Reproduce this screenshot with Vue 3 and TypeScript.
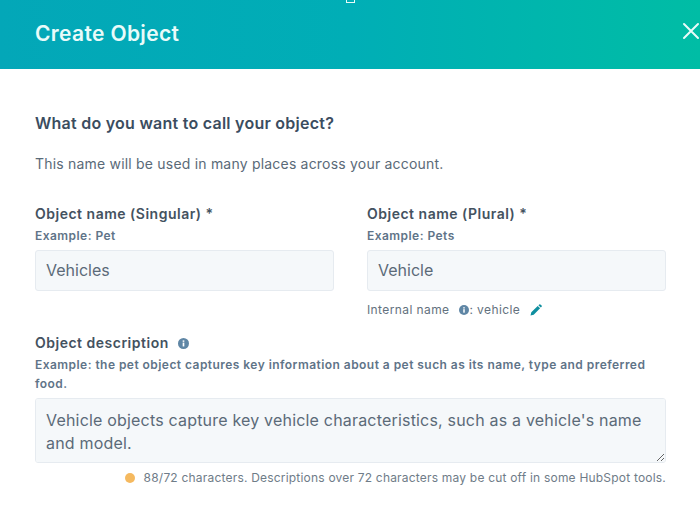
<script setup lang="ts">
import { ref } from 'vue'

const singular = ref('Vehicles')
const plural = ref('Vehicle')
const description = ref("Vehicle objects capture key vehicle characteristics, such as a vehicle's name and model.")
</script>

<template>
  <div class="modal">
    <header class="modal-header">
      <span class="cursor-mark"></span>
      <h1>Create Object</h1>
      <button class="btn-close" aria-label="Close">
        <svg width="18" height="18" viewBox="0 0 18 18" fill="none" stroke="#e8fbf8" stroke-width="2" stroke-linecap="round">
          <path d="M2 2l14 14M16 2L2 16" />
        </svg>
      </button>
    </header>

    <main class="modal-body">
      <h2>What do you want to call your object?</h2>
      <p class="intro">This name will be used in many places across your account.</p>

      <div class="name-grid">
        <div class="field">
          <label>Object name (Singular) *</label>
          <div class="example">Example: Pet</div>
          <input v-model="singular" class="text-input" />
        </div>
        <div class="field">
          <label>Object name (Plural) *</label>
          <div class="example">Example: Pets</div>
          <input v-model="plural" class="text-input" />
          <div class="internal-name">
            <span>Internal name</span>
            <svg class="info small" viewBox="0 0 12 12"><circle cx="6" cy="6" r="6" fill="#5f86a5" /><rect x="5.1" y="5" width="1.8" height="4.2" fill="#fff" /><rect x="5.1" y="2.6" width="1.8" height="1.6" fill="#fff" /></svg>
            <span class="internal-value">: vehicle</span>
            <svg class="pencil" width="12" height="12" viewBox="0 0 12 12"><path d="M0.5 11.5l0.8-3.2 6.4-6.4 2.4 2.4-6.4 6.4zM8.4 1.2l0.9-0.8a0.8 0.8 0 0 1 1.1 0l1.2 1.2a0.8 0.8 0 0 1 0 1.1l-0.8 0.9z" fill="#0f8f9f" /></svg>
          </div>
        </div>
      </div>

      <div class="field description">
        <label>Object description
          <svg class="info" viewBox="0 0 12 12"><circle cx="6" cy="6" r="6" fill="#5f86a5" /><rect x="5.1" y="5" width="1.8" height="4.2" fill="#fff" /><rect x="5.1" y="2.6" width="1.8" height="1.6" fill="#fff" /></svg>
        </label>
        <div class="example wrap">Example: the pet object captures key information about a pet such as its name, type and preferred food.</div>
        <textarea v-model="description" class="text-area"></textarea>
        <div class="char-count">
          <span class="dot"></span>
          <span>88/72 characters. Descriptions over 72 characters may be cut off in some HubSpot tools.</span>
        </div>
      </div>
    </main>
  </div>
</template>

<style>
html, body {
  margin: 0;
  background: #fff;
  overflow: hidden;
}
</style>

<style scoped>
.modal {
  width: 700px;
  height: 507px;
  overflow: hidden;
  position: relative;
  font-family: "Inter", "Open Sans", sans-serif;
  color: #33475b;
}

.modal-header {
  height: 69px;
  box-sizing: border-box;
  padding: 0 0 3px 35px;
  display: flex;
  align-items: center;
  justify-content: space-between;
  background: linear-gradient(90deg, #03a7b8 0%, #00aeb6 50%, #00bda5 100%);
  position: relative;
}

.modal-header h1 {
  margin: 0;
  color: #e9fbfa;
  font-size: 21px;
  font-weight: 600;
  letter-spacing: 0.35px;
}

.cursor-mark {
  position: absolute;
  left: 346px;
  top: -4px;
  width: 7px;
  height: 5px;
  border: 1px solid #e8fbf8;
}

.btn-close {
  border: none;
  background: none;
  padding: 0;
  margin-top: -4px;
  display: flex;
}

.modal-body {
  padding: 44px 34px 0 35px;
}

.modal-body h2 {
  margin: 0;
  font-size: 16px;
  line-height: 20px;
  font-weight: 600;
  letter-spacing: 0.25px;
  color: #3b4d5f;
}

.intro {
  margin: 22px 0 0;
  font-size: 14px;
  line-height: 18px;
  letter-spacing: 0.2px;
  color: #5a6a78;
}

.name-grid {
  display: grid;
  grid-template-columns: 299px 299px;
  column-gap: 33px;
  margin-top: 32px;
}

.field {
  display: flex;
  flex-direction: column;
  min-width: 0;
}

.field label {
  font-size: 14px;
  line-height: 18px;
  font-weight: 600;
  letter-spacing: 0.5px;
  color: #44525f;
  display: flex;
  align-items: center;
}

.example {
  margin-top: 6px;
  font-size: 12px;
  line-height: 14px;
  font-weight: 600;
  letter-spacing: 0.45px;
  color: #5f7488;
}

.text-input {
  margin-top: 7px;
  height: 41px;
  box-sizing: border-box;
  border: 1px solid #e6ebf0;
  border-radius: 3px;
  background: #f5f8fa;
  padding: 0 10px 2px;
  font: inherit;
  font-size: 16px;
  color: #5b6a78;
  outline: none;
}

.internal-name {
  display: flex;
  align-items: center;
  margin-top: 11px;
  font-size: 12px;
  line-height: 16px;
  letter-spacing: 0.4px;
  color: #63717e;
}

.internal-value {
  margin-right: 10px;
}

.info {
  width: 11px;
  height: 11px;
  margin-left: 9px;
  flex: none;
}

.info.small {
  width: 10px;
  height: 10px;
  margin-left: 10px;
}

.description {
  margin-top: 16px;
}

.example.wrap {
  margin-top: 3px;
  line-height: 19px;
  width: 620px;
}

.text-area {
  display: block;
  margin-top: 5px;
  height: 65px;
  width: 631px;
  box-sizing: border-box;
  border: 1px solid #e6ebf0;
  border-radius: 3px;
  background: #f5f8fa;
  padding: 10px 10px 8px;
  font: inherit;
  font-size: 16px;
  line-height: 23px;
  letter-spacing: 0.19px;
  color: #5b6a78;
  outline: none;
  resize: vertical;
}

.char-count {
  display: flex;
  align-items: center;
  justify-content: flex-end;
  gap: 9px;
  margin-top: 7px;
  font-size: 12px;
  line-height: 16px;
  letter-spacing: 0.2px;
  color: #6f7c88;
}

.dot {
  width: 10px;
  height: 10px;
  border-radius: 50%;
  background: #f5b95f;
}
</style>
